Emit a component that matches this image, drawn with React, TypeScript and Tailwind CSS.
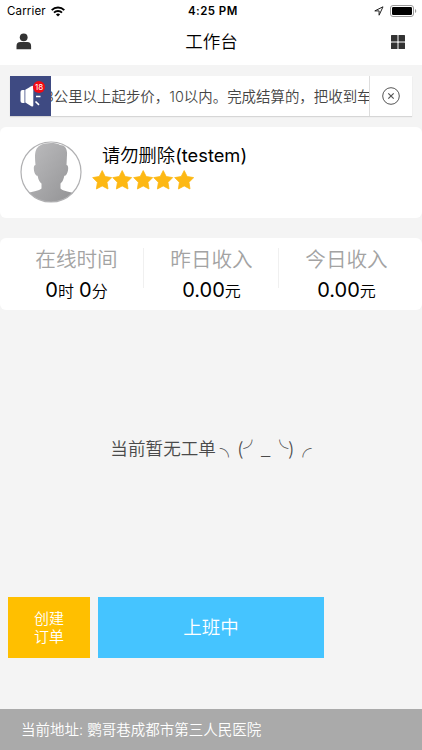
import React from 'react';

const stats = [
  { label: '在线时间', parts: [['0', '时'], ['0', '分']] },
  { label: '昨日收入', parts: [['0.00', '元']] },
  { label: '今日收入', parts: [['0.00', '元']] },
];

const StatusBar: React.FC = () => (
  <div className="relative flex h-[22px] items-center justify-between pl-[7px] pr-[5px] text-black">
    <div className="flex items-center gap-[5px]">
      <span className="text-[11.5px] leading-[22px] tracking-[0.15px]">Carrier</span>
      <svg width="14" height="11" viewBox="0 0 14 11" fill="none" stroke="#000" strokeWidth="1.9">
        <path d="M0.7 4.1a9 9 0 0 1 12.6 0" />
        <path d="M3 6.6a5.7 5.7 0 0 1 8 0" />
        <path d="M7 10.6L4.9 8.5a3 3 0 0 1 4.2 0z" fill="#000" stroke="none" />
      </svg>
    </div>
    <span className="absolute left-[188px] text-[11.5px] font-semibold leading-[22px] tracking-[0.45px]">4:25 PM</span>
    <div className="flex items-center gap-[6px]">
      <svg width="10" height="10" viewBox="0 0 10 10" fill="none" stroke="#222" strokeWidth="1" strokeLinejoin="round">
        <path d="M9 0.8L0.8 4.9h4.3v4.3z" />
      </svg>
      <svg width="27" height="12" viewBox="0 0 27 12">
        <rect x="0.5" y="0.5" width="23" height="11" rx="2.5" fill="none" stroke="#999" />
        <rect x="2" y="2" width="20" height="8" rx="1.2" fill="#000" />
        <path d="M25 4a2.2 2.2 0 0 1 0 4z" fill="#999" />
      </svg>
    </div>
  </div>
);

const Header: React.FC = () => (
  <div className="flex h-[43px] items-center justify-between pl-4 pr-[17px]">
    <svg width="16" height="17" viewBox="0 0 16 17" fill="#333" className="-mt-1">
      <circle cx="7.7" cy="4.3" r="3.9" />
      <path d="M0.5 16.3v-3.2a4 4 0 0 1 4-4h6.6a4 4 0 0 1 4 4v3.2z" />
    </svg>
    <h1 className="-mt-1 text-[17.5px] font-[350] leading-6 text-black">工作台</h1>
    <svg width="14" height="14" viewBox="0 0 14 14" fill="#333" className="-mt-1">
      <rect width="6.5" height="6.5" rx="0.5" />
      <rect x="7.5" width="6.5" height="6.5" rx="0.5" />
      <rect y="7.5" width="6.5" height="6.5" rx="0.5" />
      <rect x="7.5" y="7.5" width="6.5" height="6.5" rx="0.5" />
    </svg>
  </div>
);

const Notice: React.FC = () => (
  <div className="mx-[10px] mt-[11px] flex h-10 w-[402px] bg-white shadow-[0_1px_1px_rgba(0,0,0,0.12)]">
    <div className="relative z-10 w-[41px] shrink-0 bg-[#3e4a82]">
      <svg width="41" height="40" viewBox="0 0 41 40" fill="#fff">
        <path d="M14.5 14v13h-2a2 2 0 0 1-2-2v-9a2 2 0 0 1 2-2z" />
        <path d="M15.3 13.8l6-3.6q2-1 2 1v18q0 2-2 1l-6-3.7z" />
        <path d="M26 20.5h4.5M25.5 25.5l3.5 3.3" stroke="#fff" strokeWidth="1.6" />
      </svg>
      <span className="absolute left-[23px] top-[5px] h-3 w-3 rounded-full bg-[#f20a13] text-center text-[8px] leading-3 text-white">18</span>
    </div>
    <div className="flex flex-1 items-center justify-start overflow-hidden whitespace-nowrap pt-[2px] text-[14.45px] font-[350] text-[#444]">
      <span className="-ml-[6px]">3公里以上起步价，10以内。完成结算的，把收到车</span>
    </div>
    <div className="flex w-[43px] shrink-0 items-center justify-center border-l border-[#ddd] bg-white">
      <svg width="18" height="18" viewBox="0 0 18 18" fill="none" stroke="#555" strokeWidth="1">
        <circle cx="9" cy="9" r="8.3" />
        <path d="M6.3 6.3l5.4 5.4M11.7 6.3l-5.4 5.4" strokeWidth="1.2" />
      </svg>
    </div>
  </div>
);

const Avatar: React.FC = () => (
  <svg width="62" height="62" viewBox="0 0 62 62" className="shrink-0">
    <defs>
      <linearGradient id="shade" x1="0" y1="0" x2="1" y2="1">
        <stop offset="0" stopColor="#bdbdbf" />
        <stop offset="1" stopColor="#929294" />
      </linearGradient>
      <clipPath id="round">
        <circle cx="31" cy="31" r="30" />
      </clipPath>
    </defs>
    <circle cx="31" cy="31" r="30" fill="#fff" />
    <path
      clipPath="url(#round)"
      fill="url(#shade)"
      d="M15.5 24C14.5 14 14.5 7.5 20 4.500c5-3 16-3.200 20-0.500 5 0 7.500 4 7 10l-0.500 10c2.300 0 2 5.500 0.500 8.500-0.800 1.700-1.500 2.300-2.700 2.300-1 5-2.200 6.200-3.800 7.700v5c2 2.300 7 2.800 13.500 4.500V62H7v-10c6.500-1.700 12-2.200 14.500-4.500v-5c-1.800-1.500-3-3-3.900-7.700-1 0-1.900-0.600-2.700-2.300-1.400-3-1.700-8.500 0.600-8.500z"
    />
    <circle cx="31" cy="31" r="30" fill="none" stroke="#b0b0b2" strokeWidth="1.2" />
  </svg>
);

const Star: React.FC = () => (
  <svg width="20.4" height="20" viewBox="0 0 20.4 20" fill="#fdb813">
    <path
      stroke="#fdb813"
      strokeWidth="0.8"
      strokeLinejoin="round"
      d="M10.2 0.6l3 5.900 6.500 1.100-4.700 4.700 1 6.700-5.800-3.100-5.800 3.100 1-6.700-4.700-4.700 6.500-1.100z"
    />
  </svg>
);

const Profile: React.FC = () => (
  <div className="mt-[11px] flex h-[91px] rounded-md bg-white pl-[20px] pt-[14px]">
    <Avatar />
    <div className="ml-[10px]">
      <div className="ml-[10px] h-7 whitespace-nowrap text-[18.3px] font-[350] leading-7 text-black">
        请勿删除<span className="font-normal">(testem)</span>
      </div>
      <div className="mt-[1px] flex">
        {[1, 2, 3, 4, 5].map((n) => (
          <Star key={n} />
        ))}
      </div>
    </div>
  </div>
);

const Stats: React.FC = () => (
  <div className="mt-5 flex h-[72px] rounded-md bg-white pl-[9px] pr-[8px]">
    {stats.map((s, i) => (
      <div key={s.label} className="relative flex-1 text-center">
        <div className="mt-[7px] h-[29px] text-[20.6px] font-[350] leading-[30px] text-[#a3a3a3]">{s.label}</div>
        <div className="flex h-[32px] items-baseline justify-center gap-[5px] leading-[32px] text-black">
          {s.parts.map(([value, unit], n) => (
            <span key={n}>
              <span className="text-[20px]">{value}</span>
              <span className="text-[16px] font-[350]">{unit}</span>
            </span>
          ))}
        </div>
        {i > 0 && <div className="absolute -left-px top-[10px] h-10 w-px bg-[#f0f0f0]" />}
      </div>
    ))}
  </div>
);

const App: React.FC = () => {
  return (
    <div className="flex h-[750px] w-[422px] flex-col overflow-hidden bg-[#f4f4f4] font-['Inter','Noto_Sans_CJK_SC',sans-serif]">
      <div className="bg-white">
        <StatusBar />
        <Header />
      </div>
      <Notice />
      <Profile />
      <Stats />

      <div className="flex flex-1 items-center justify-center whitespace-pre pb-[10px] font-['Noto_Sans_CJK_SC',sans-serif] text-[17.6px] font-[350] text-[#4a4a4a]">
        当前暂无工单 ╮(╯_╰)╭
      </div>

      <div className="flex h-[61px] gap-2 pl-[8px]">
        <button className="w-[82px] bg-[#ffbf00] text-[15px] font-[350] leading-[18px] text-white">
          创建
          <br />
          订单
        </button>
        <button className="w-[226px] bg-[#45c4ff] text-[18.5px] font-[350] text-white">上班中</button>
      </div>
      <div className="mt-[51px] flex h-[41px] items-center bg-[#aaa] pl-[21px] pt-px text-[14.5px] font-[350] text-white">
        当前地址: 鹦哥巷成都市第三人民医院
      </div>
    </div>
  );
};

export default App;
